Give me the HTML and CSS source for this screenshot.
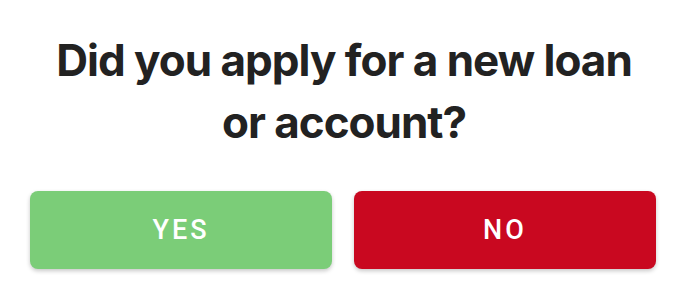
FILE: index.html
```html
<!DOCTYPE html>
<html lang="en">
<head>
<meta charset="utf-8">
<title>Question</title>
<link rel="stylesheet" href="styles.css">
</head>
<body>
<main class="prompt">
  <h1 class="prompt-title">Did you apply for a new loan<br>or account?</h1>
  <div class="prompt-actions">
    <button class="btn btn-yes" type="button">YES</button>
    <button class="btn btn-no" type="button">NO</button>
  </div>
</main>
</body>
</html>
```
FILE: styles.css
```css
html, body {
  margin: 0;
  padding: 0;
  background: #ffffff;
}
.prompt {
  width: 688px;
  height: 301px;
  box-sizing: border-box;
  padding-top: 29px;
}
.prompt-title {
  margin: 0;
  font-family: Inter, "Liberation Sans", sans-serif;
  font-weight: 700;
  font-size: 44px;
  line-height: 62px;
  color: #222222;
  text-align: center;
  letter-spacing: -1px;
}
.prompt-actions {
  display: flex;
  gap: 22px;
  padding: 0 32px 0 30px;
  margin-top: 38px;
}
.btn {
  flex: 1;
  height: 78px;
  border: none;
  border-radius: 8px;
  font-family: Roboto, "Liberation Sans", sans-serif;
  font-weight: 500;
  font-size: 27px;
  letter-spacing: 3px;
  color: #ffffff;
  box-shadow: 0 2px 4px rgba(0, 0, 0, 0.22);
  padding: 0;
  cursor: pointer;
}
.btn-yes {
  background: #7bcd78;
}
.btn-no {
  background: #c90820;
}
```
